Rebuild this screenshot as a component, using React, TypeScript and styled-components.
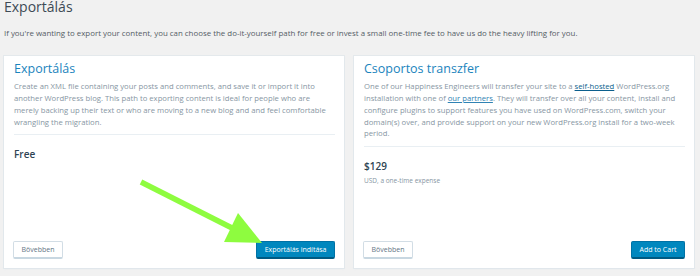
import styled, { createGlobalStyle } from 'styled-components';

const GlobalStyle = createGlobalStyle`
  html, body {
    margin: 0;
    padding: 0;
    background: #f1f1f1;
  }
  body {
    font-family: "Open Sans", "Liberation Sans", sans-serif;
    -webkit-font-smoothing: antialiased;
  }
`;

const Page = styled.div`
  position: relative;
  width: 700px;
  height: 276px;
  padding: 0 6px 0 4px;
  box-sizing: border-box;
  overflow: hidden;
`;

const PageTitle = styled.h1`
  margin: 0;
  font-size: 14px;
  line-height: 14px;
  font-weight: 400;
  color: #3d4a55;
`;

const Intro = styled.p`
  margin: 13.5px 0 0;
  font-size: 7.9px;
  line-height: 11px;
  color: #555d66;
`;

const Cards = styled.div`
  display: grid;
  grid-template-columns: 340px 340px;
  gap: 10px;
  height: 212px;
  margin-top: 17.4px;
`;

const Card = styled.section`
  display: flex;
  flex-direction: column;
  background: #fff;
  box-shadow: 0 0 0 1px rgba(215, 225, 232, 0.5), 0 1px 2px #e6ebef;
  padding: 5px 9px 8.5px;
  box-sizing: border-box;
`;

const CardTitle = styled.h2`
  margin: 0 0 0 1px;
  font-size: 12.5px;
  line-height: 16px;
  font-weight: 400;
  color: #1b84bd;
`;

const CardText = styled.p`
  margin: 4.4px 0 0 1px;
  font-size: 7.7px;
  line-height: 11.8px;
  color: #8796a3;
  padding-bottom: 5.5px;
  border-bottom: 1px solid #e9eff3;
`;

const Link = styled.a<{ $dark?: boolean }>`
  color: ${(p) => (p.$dark ? '#0b5f8d' : '#3083b4')};
  text-decoration: underline;
`;

const Price = styled.div`
  margin: 12px 0 0 1px;
  font-size: 10px;
  line-height: 14px;
  font-weight: 600;
  color: #2e4453;
`;

const PriceNote = styled.div`
  margin: 3px 0 0 1px;
  font-size: 6.5px;
  line-height: 9px;
  color: #8796a3;
`;

const Footer = styled.div`
  margin-top: auto;
  display: flex;
  justify-content: space-between;
  align-items: flex-end;
`;

const Button = styled.button<{ $primary?: boolean }>`
  height: 18px;
  padding: 0 7.5px;
  font-family: "Open Sans", "Liberation Sans", sans-serif;
  font-size: 7px;
  line-height: 1;
  border-radius: 2px;
  border: 1px solid ${(p) => (p.$primary ? '#0072a5' : '#d2dde5')};
  border-bottom-width: 2px;
  border-bottom-color: ${(p) => (p.$primary ? '#005a82' : '#c8d7e1')};
  background: ${(p) => (p.$primary ? '#0087be' : '#fff')};
  color: ${(p) => (p.$primary ? '#fff' : '#5f7585')};
  cursor: pointer;
`;

const Annotation = styled.svg`
  position: absolute;
  left: 0;
  top: 0;
  width: 700px;
  height: 276px;
  pointer-events: none;
`;

export default function App() {
  return (
    <>
      <GlobalStyle />
      <Page>
        <PageTitle>Exportálás</PageTitle>
        <Intro>
          If you're wanting to export your content, you can choose the do-it-yourself path for free or invest a
          small one-time fee to have us do the heavy lifting for you.
        </Intro>
        <Cards>
          <Card>
            <CardTitle>Exportálás</CardTitle>
            <CardText>
              Create an XML file containing your posts and comments, and save it or import it into another
              WordPress blog. This path to exporting content is ideal for people who are merely backing up their
              text or who are moving to a new blog and and feel comfortable wrangling the migration.
            </CardText>
            <Price>Free</Price>
            <Footer>
              <Button>Bövebben</Button>
              <Button $primary>Exportálás indítása</Button>
            </Footer>
          </Card>
          <Card>
            <CardTitle>Csoportos transzfer</CardTitle>
            <CardText>
              One of our Happiness Engineers will transfer your site to a <Link $dark>self-hosted</Link>{' '}
              WordPress.org installation with one of <Link>our partners</Link>. They will transfer over all your
              content, install and configure plugins to support features you have used on WordPress.com, switch
              your domain(s) over, and provide support on your new WordPress.org install for a two-week period.
            </CardText>
            <Price>$129</Price>
            <PriceNote>USD, a one-time expense</PriceNote>
            <Footer>
              <Button>Bövebben</Button>
              <Button $primary>Add to Cart</Button>
            </Footer>
          </Card>
        </Cards>
        <Annotation viewBox="0 0 700 276">
          <line x1="141" y1="182" x2="234" y2="229" stroke="#8efc3f" strokeWidth="5.5" />
          <polygon points="238,213 224,242 262,243" fill="#8efc3f" />
        </Annotation>
      </Page>
    </>
  );
}
